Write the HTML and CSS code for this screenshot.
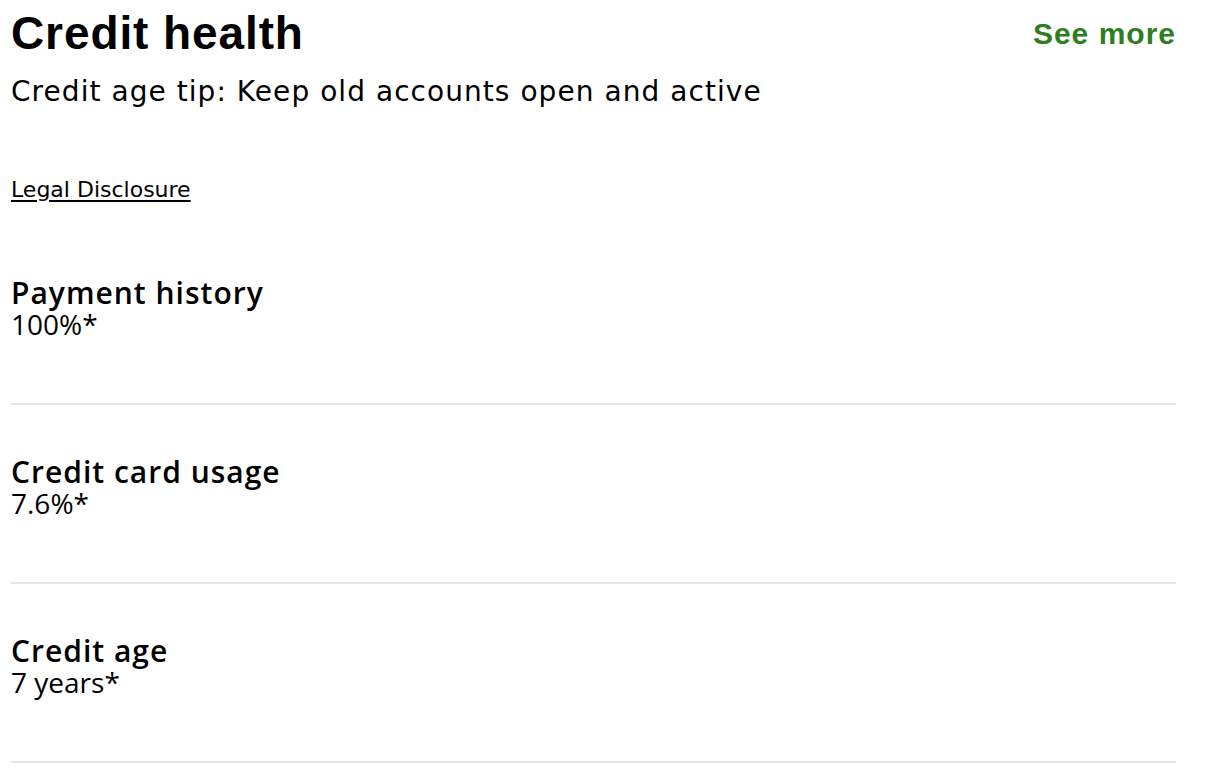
FILE: index.html
```html
<!DOCTYPE html>
<html lang="en">
<head>
<meta charset="utf-8">
<title>Credit health</title>
<link rel="stylesheet" href="styles.css">
</head>
<body>
<main class="card">
  <header class="card-header">
    <h1 class="title">Credit health</h1>
    <a class="see-more" href="#">See more</a>
  </header>
  <p class="tip">Credit age tip: Keep old accounts open and active</p>
  <a class="legal" href="#">Legal Disclosure</a>
  <ul class="factors">
    <li class="factor">
      <h2 class="factor-name">Payment history</h2>
      <p class="factor-value">100%*</p>
    </li>
    <li class="factor">
      <h2 class="factor-name">Credit card usage</h2>
      <p class="factor-value">7.6%*</p>
    </li>
    <li class="factor">
      <h2 class="factor-name">Credit age</h2>
      <p class="factor-value">7 years*</p>
    </li>
  </ul>
</main>
</body>
</html>
```

FILE: styles.css
```css
* { box-sizing: border-box; }
html, body { margin: 0; padding: 0; background: #fff; }
body {
  font-family: "Open Sans", "Liberation Sans", sans-serif;
  color: #000;
}
.card {
  width: 1176px;
  padding-left: 11px;
}
.card-header {
  display: flex;
  justify-content: space-between;
  align-items: flex-start;
  height: 66px;
}
.title {
  margin: 0;
  font-family: "Liberation Sans", Arial, sans-serif;
  font-weight: 700;
  font-size: 46px;
  line-height: 66px;
  letter-spacing: 0.9px;
}
.see-more {
  font-family: "Liberation Sans", Arial, sans-serif;
  font-weight: 700;
  font-size: 30px;
  line-height: 67px;
  color: #2f7d1f;
  text-decoration: none;
  letter-spacing: 1px;
}
.tip {
  margin: 0;
  padding-top: 2px;
  font-family: "DejaVu Sans", "Open Sans", sans-serif;
  font-size: 28px;
  line-height: 48px;
  letter-spacing: 1.05px;
}
.legal {
  display: block;
  width: max-content;
  margin-top: 60px;
  font-family: "DejaVu Sans", "Open Sans", sans-serif;
  font-size: 22px;
  line-height: 28px;
  color: #000;
  text-decoration: underline;
  text-decoration-thickness: 2px;
  text-underline-offset: 3px;
}
.factors {
  list-style: none;
  margin: 74px 0 0 0;
  padding: 0;
}
.factor {
  border-bottom: 2px solid #e3e6e9;
  padding-bottom: 63px;
}
.factor + .factor {
  padding-top: 52px;
}
.factor-name {
  margin: 0;
  font-size: 30px;
  font-weight: 600;
  line-height: 30px;
  letter-spacing: 1px;
}
.factor-value {
  margin: 0;
  font-size: 28px;
  line-height: 32px;
}
```
